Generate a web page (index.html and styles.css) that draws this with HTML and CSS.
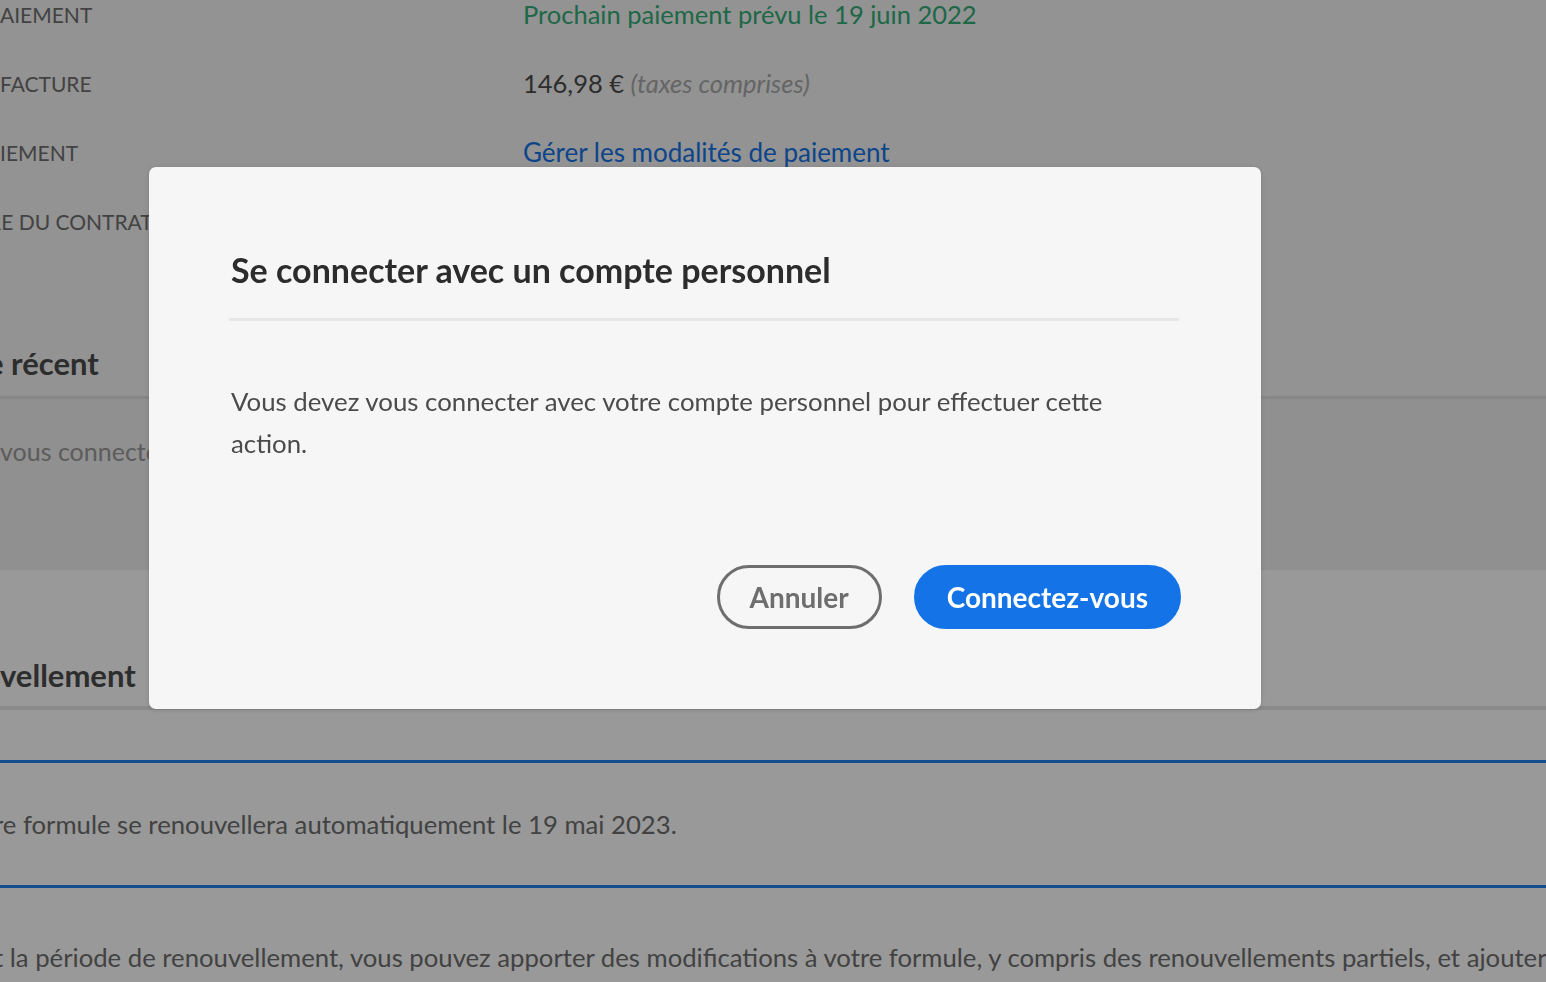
FILE: index.html
```html
<!DOCTYPE html>
<html lang="fr">
<head>
<meta charset="utf-8">
<title>Se connecter avec un compte personnel</title>
<link rel="stylesheet" href="styles.css">
</head>
<body>
<div class="page">
  <section class="summary">
    <div class="details">
      <div class="label">AIEMENT</div>
      <div class="value value-green">Prochain paiement prévu le 19 juin 2022</div>
      <div class="label">FACTURE</div>
      <div class="value">146,98 € <em class="muted">(taxes comprises)</em></div>
      <div class="label">IEMENT</div>
      <div class="value"><a class="link" href="#">Gérer les modalités de paiement</a></div>
      <div class="label label-cut">RE DU CONTRAT</div>
      <div class="value">19 mai 2023</div>
    </div>
    <h2 class="section-title title-cut">e récent</h2>
  </section>
  <section class="recent">
    <p class="recent-text">vous connecter pour afficher vos transactions récentes.</p>
  </section>
  <section class="renewal">
    <h2 class="section-title">vellement</h2>
    <div class="renewal-row">
      <p class="renewal-text">re formule se renouvellera automatiquement le 19 mai 2023.</p>
    </div>
    <p class="renewal-text renewal-note">t la période de renouvellement, vous pouvez apporter des modifications à votre formule, y compris des renouvellements partiels, et ajouter des produits.</p>
  </section>
</div>

<div class="overlay"></div>

<div class="dialog" role="dialog" aria-labelledby="dlg-title">
  <h1 class="dialog-title" id="dlg-title">Se connecter avec un compte personnel</h1>
  <hr class="dialog-rule">
  <p class="dialog-body">Vous devez vous connecter avec votre compte personnel pour effectuer cette action.</p>
  <div class="dialog-actions">
    <button class="btn btn-secondary" type="button">Annuler</button>
    <button class="btn btn-primary" type="button">Connectez-vous</button>
  </div>
</div>
</body>
</html>
```

FILE: styles.css
```css
* { box-sizing: border-box; }

html, body {
  margin: 0;
  padding: 0;
  height: 100%;
  overflow: hidden;
}

body {
  font-family: Lato, "Open Sans", sans-serif;
  background: #ffffff;
  color: #4b4b4b;
}

.page {
  width: 100%;
}

.summary {
  display: flow-root;
  background: #f5f5f5;
  height: 399px;
  border-bottom: 3px solid #e2e2e2;
}

.details {
  display: grid;
  grid-template-columns: 523px 1fr;
  grid-auto-rows: 34px;
  row-gap: 35px;
  margin-top: -3px;
  align-items: center;
}

.label {
  font-size: 21px;
  color: #6e6e6e;
  white-space: nowrap;
}

.label-cut {
  margin-left: -12px;
}

.value {
  font-size: 25.5px;
  color: #4b4b4b;
  white-space: nowrap;
}

.value-green {
  color: #33ad78;
}

.muted {
  color: #a8a8a8;
}

.link {
  color: #1473e6;
  text-decoration: none;
  font-size: 26px;
}

.section-title {
  margin: 0;
  font-size: 31px;
  font-weight: 700;
  color: #4b4b4b;
  white-space: nowrap;
  line-height: 36px;
}

.summary .section-title {
  margin-top: 107px;
}

.title-cut {
  margin-left: -13px;
}

.recent {
  background: #f0f0f0;
  height: 171px;
  padding-top: 35px;
}

.recent-text {
  margin: 0;
  font-size: 25px;
  line-height: 34px;
  color: #999999;
  white-space: nowrap;
}

.renewal {
  background: #ffffff;
  padding-top: 87px;
}

.renewal .section-title {
  padding-bottom: 13px;
  border-bottom: 4px solid #e6e6e6;
}

.renewal-row {
  margin-top: 50px;
  border-top: 3px solid #2680eb;
  border-bottom: 3px solid #2680eb;
  height: 128px;
  display: flex;
  align-items: center;
}

.renewal-text {
  margin: 0;
  font-size: 25.7px;
  line-height: 34px;
  color: #6e6e6e;
  white-space: nowrap;
  margin-left: -6px;
}

.renewal-note {
  margin-top: 52px;
}

.overlay {
  position: fixed;
  inset: 0;
  background: rgba(0, 0, 0, 0.4);
}

.dialog {
  position: absolute;
  left: 149px;
  top: 167px;
  width: 1112px;
  height: 542px;
  background: #f6f6f6;
  border-radius: 7px;
  padding: 83px 84px 80px 82px;
  display: flex;
  flex-direction: column;
  box-shadow: 0 1px 4px rgba(0, 0, 0, 0.15);
}

.dialog-title {
  margin: 0;
  font-size: 34px;
  font-weight: 700;
  line-height: 40px;
  color: #2c2c2c;
}

.dialog-rule {
  margin: 28px -2px 0 -2px;
  border: 0;
  height: 3px;
  background: #e6e6e6;
}

.dialog-body {
  margin: 59px 0 0 0;
  font-size: 25.8px;
  line-height: 42px;
  color: #4b4b4b;
}

.dialog-actions {
  margin-top: auto;
  display: flex;
  justify-content: flex-end;
  gap: 32px;
  margin-right: -4px;
}

.btn {
  height: 64px;
  border-radius: 32px;
  padding: 0 30px;
  border: 3px solid transparent;
  font-family: inherit;
  font-size: 28px;
  font-weight: 700;
  cursor: pointer;
}

.btn-secondary {
  background: transparent;
  border-color: #6e6e6e;
  color: #6e6e6e;
}

.btn-primary {
  background: #1473e6;
  border-color: #1473e6;
  color: #ffffff;
}
```
